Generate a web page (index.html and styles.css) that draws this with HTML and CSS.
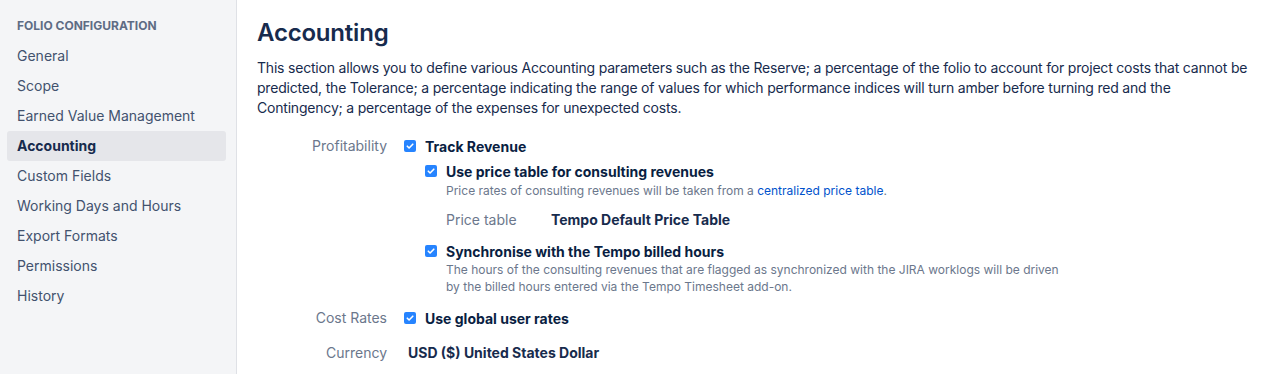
FILE: index.html
```html
<!DOCTYPE html>
<html>
<head>
<meta charset="utf-8">
<link rel="stylesheet" href="styles.css">
</head>
<body>
<div class="page">
  <nav class="sidebar">
    <div class="side-title">FOLIO CONFIGURATION</div>
    <a class="side-item">General</a>
    <a class="side-item">Scope</a>
    <a class="side-item">Earned Value Management</a>
    <a class="side-item active">Accounting</a>
    <a class="side-item">Custom Fields</a>
    <a class="side-item">Working Days and Hours</a>
    <a class="side-item">Export Formats</a>
    <a class="side-item">Permissions</a>
    <a class="side-item">History</a>
  </nav>
  <main class="main">
    <h1 class="title">Accounting</h1>
    <p class="intro">This section allows you to define various Accounting parameters such as the Reserve; a percentage of the folio to account for project costs that cannot be predicted, the Tolerance; a percentage indicating the range of values for which performance indices will turn amber before turning red and the Contingency; a percentage of the expenses for unexpected costs.</p>

    <div class="form">
      <div class="row">
        <div class="label">Profitability</div>
        <div class="field">
          <div class="check"><span class="box"><svg viewBox="0 0 12 12" width="12" height="12"><path d="M3.3 6.2 L5.1 8 L8.8 4.2" fill="none" stroke="#fff" stroke-width="1.6" stroke-linecap="round" stroke-linejoin="round"/></svg></span><span class="check-text">Track Revenue</span></div>
          <div class="sub">
            <div class="check"><span class="box"><svg viewBox="0 0 12 12" width="12" height="12"><path d="M3.3 6.2 L5.1 8 L8.8 4.2" fill="none" stroke="#fff" stroke-width="1.6" stroke-linecap="round" stroke-linejoin="round"/></svg></span><span class="check-text">Use price table for consulting revenues</span></div>
            <div class="desc first">Price rates of consulting revenues will be taken from a <a class="link">centralized price table</a>.</div>
            <div class="pair"><span class="pair-label">Price table</span><span class="pair-value">Tempo Default Price Table</span></div>
            <div class="check sync"><span class="box"><svg viewBox="0 0 12 12" width="12" height="12"><path d="M3.3 6.2 L5.1 8 L8.8 4.2" fill="none" stroke="#fff" stroke-width="1.6" stroke-linecap="round" stroke-linejoin="round"/></svg></span><span class="check-text">Synchronise with the Tempo billed hours</span></div>
            <div class="desc">The hours of the consulting revenues that are flagged as synchronized with the JIRA worklogs will be driven<br>by the billed hours entered via the Tempo Timesheet add-on.</div>
          </div>
        </div>
      </div>
      <div class="row cost">
        <div class="label">Cost Rates</div>
        <div class="field">
          <div class="check"><span class="box"><svg viewBox="0 0 12 12" width="12" height="12"><path d="M3.3 6.2 L5.1 8 L8.8 4.2" fill="none" stroke="#fff" stroke-width="1.6" stroke-linecap="round" stroke-linejoin="round"/></svg></span><span class="check-text">Use global user rates</span></div>
        </div>
      </div>
      <div class="row currency">
        <div class="label">Currency</div>
        <div class="field"><span class="value">USD ($) United States Dollar</span></div>
      </div>
    </div>
  </main>
</div>
</body>
</html>
```

FILE: styles.css
```css
* { box-sizing: border-box; }
html, body { margin: 0; padding: 0; }
body {
  font-family: Inter, "Noto Sans", "Liberation Sans", sans-serif;
  color: #172b4d;
  background: #fff;
  font-size: 14px;
  overflow: hidden;
}
.page {
  display: flex;
  height: 374px;
}
.sidebar {
  width: 237px;
  flex: none;
  background: #f4f5f7;
  border-right: 1px solid #dfe1e6;
  padding: 11px 10px 0 7px;
  display: flex;
  flex-direction: column;
}
.side-title {
  font-size: 12px;
  font-weight: 700;
  color: #5e6c84;
  padding-left: 10px;
  height: 30px;
  line-height: 30px;
}
.side-item {
  display: block;
  height: 30px;
  line-height: 30px;
  padding-left: 10px;
  font-size: 14px;
  color: #42526e;
  border-radius: 3px;
}
.side-item.active {
  background: #e5e6ea;
  color: #172b4d;
  font-weight: 700;
}
.main {
  flex: 1;
  padding: 18px 8px 0 20px;
}
.title {
  margin: 0;
  font-size: 24px;
  font-weight: 600;
  line-height: 30px;
  color: #172b4d;
  letter-spacing: -0.2px;
}
.intro {
  margin: 10px 0 0 0;
  font-size: 14px;
  line-height: 20px;
  color: #172b4d;
  letter-spacing: -0.2px;
}
.form {
  margin-top: 18px;
}
.row {
  display: flex;
}
.label {
  width: 130px;
  flex: none;
  text-align: right;
  color: #6b778c;
  font-size: 14px;
  line-height: 20px;
}
.field {
  padding-left: 17px;
}
.check {
  display: flex;
  align-items: center;
  height: 20px;
}
.box {
  width: 12px;
  height: 12px;
  border-radius: 2px;
  background: #2684ff;
  display: inline-flex;
  margin-right: 9px;
  flex: none;
}
.box svg { display: block; }
.check-text {
  font-weight: 700;
  color: #091e42;
  font-size: 14px;
}
.sub {
  padding-left: 21px;
  margin-top: 5px;
}
.desc {
  padding-left: 21px;
  font-size: 12px;
  line-height: 17px;
  color: #6b778c;
}
.desc.first {
  margin-top: 1px;
}
.link {
  color: #0052cc;
  text-decoration: none;
}
.pair {
  display: flex;
  padding-left: 21px;
  margin-top: 11px;
  line-height: 20px;
}
.pair-label {
  width: 105px;
  color: #6b778c;
}
.pair-value {
  font-weight: 700;
  color: #172b4d;
}
.sync {
  margin-top: 11px;
}
.cost {
  margin-top: 13px;
}
.currency {
  margin-top: 15px;
}
.value {
  display: block;
  line-height: 20px;
  font-weight: 700;
  color: #172b4d;
  margin-left: 4px;
}
```
